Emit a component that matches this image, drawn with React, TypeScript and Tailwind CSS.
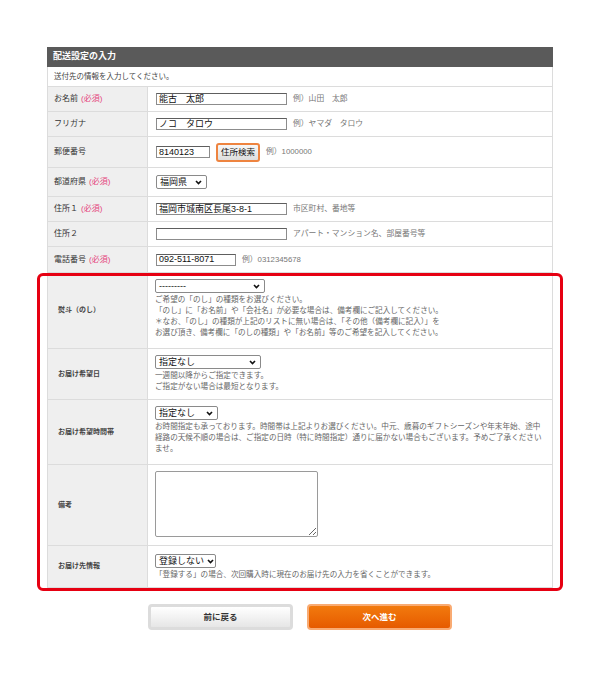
import React from "react";

const Req = () => <span className="ml-[3px] text-[#e5457d]">(必須)</span>;

const Chevron = () => (
  <svg width="7" height="5" viewBox="0 0 7 5" className="shrink-0">
    <polyline points="1,1 3.5,3.6 6,1" fill="none" stroke="#111" strokeWidth="1.6" />
  </svg>
);

const Select = ({ text, w }: { text: string; w: string }) => (
  <div
    className={`flex h-[14px] ${w} items-center justify-between gap-[3px] whitespace-nowrap rounded-[2px] border border-[#8a8a8a] bg-white pl-[3px] pr-[4px] text-[9px] leading-none text-[#111]`}
  >
    <span>{text}</span>
    <Chevron />
  </div>
);

const Input = ({ value, w }: { value: string; w: string }) => (
  <div
    className={`flex h-[12px] ${w} items-center border border-[#8c8c8c] border-t-[#5e5e5e] bg-white px-[2px] text-[9px] leading-none text-[#111]`}
  >
    {value}
  </div>
);

const Row = ({ label, h, children }: { label: React.ReactNode; h: string; children: React.ReactNode }) => (
  <div className={`flex ${h} border-b border-[#dcdcdc]`}>
    <div className="flex w-[100px] shrink-0 items-center border-r border-[#dcdcdc] bg-[#efefef] pl-[6px] text-[8px] text-[#333]">
      {label}
    </div>
    <div className="flex flex-1 items-center gap-[6px] pl-[8px] text-[7.8px] text-[#777]">{children}</div>
  </div>
);

const LowRow = ({ label, h, children }: { label: string; h: string; children: React.ReactNode }) => (
  <div className={`flex ${h} border-b border-[#dcdcdc]`}>
    <div className="flex w-[100px] shrink-0 items-center border-r border-[#dcdcdc] bg-[#efefef] pl-[10px] text-[7px] font-bold text-[#444]">
      {label}
    </div>
    <div className="flex-1 pl-[7px] pr-[7px] pt-[6px] text-[7.6px] leading-[11px] text-[#666]">{children}</div>
  </div>
);

export default function App() {
  return (
    <div className="min-h-[688px] bg-white pt-[47px] font-['Liberation_Sans','Noto_Sans_CJK_JP',sans-serif]">
      <div className="mx-auto w-[506px]">
        <div className="flex h-[20px] items-center bg-[#5a5a5a] pl-[6px] text-[9px] font-bold text-white">
          配送設定の入力
        </div>
        <div className="border-x border-[#dcdcdc]">
          <div className="flex h-[20px] items-center border-b border-[#dcdcdc] pl-[6px] text-[7.5px] text-[#444]">
            送付先の情報を入力してください。
          </div>
          <Row h="h-[25px]" label={<>お名前<Req /></>}>
            <Input value="能古　太郎" w="w-[131px]" />
            <span>例）山田　太郎</span>
          </Row>
          <Row h="h-[25px]" label="フリガナ">
            <Input value="ノコ　タロウ" w="w-[131px]" />
            <span>例）ヤマダ　タロウ</span>
          </Row>
          <Row h="h-[31px]" label="郵便番号">
            <Input value="8140123" w="w-[54px]" />
            <div className="flex h-[19px] w-[44px] items-center justify-center rounded-[3px] border-2 border-[#ee8440] bg-linear-to-b from-[#f7f7f7] to-[#dedede] text-[8.5px] text-[#111]">
              住所検索
            </div>
            <span>例）1000000</span>
          </Row>
          <Row h="h-[29px]" label={<>都道府県<Req /></>}>
            <Select text="福岡県" w="w-[51px]" />
          </Row>
          <Row h="h-[25px]" label={<>住所１<Req /></>}>
            <Input value="福岡市城南区長尾3-8-1" w="w-[131px]" />
            <span>市区町村、番地等</span>
          </Row>
          <Row h="h-[25px]" label="住所２">
            <Input value="" w="w-[131px]" />
            <span>アパート・マンション名、部屋番号等</span>
          </Row>
          <Row h="h-[26px]" label={<>電話番号<Req /></>}>
            <Input value="092-511-8071" w="w-[80px]" />
            <span>例）0312345678</span>
          </Row>

          <div className="relative">
            <LowRow h="h-[76px]" label="熨斗（のし）">
              <Select text="---------" w="w-[110px]" />
              <p className="mt-[1px]">
                ご希望の「のし」の種類をお選びください。
                <br />
                「のし」に「お名前」や「会社名」が必要な場合は、備考欄にご記入してください。
                <br />
                ＊なお、「のし」の種類が上記のリストに無い場合は、「その他（備考欄に記入）」を
                <br />
                お選び頂き、備考欄に「のしの種類」や「お名前」等のご希望を記入してください。
              </p>
            </LowRow>
            <LowRow h="h-[51px]" label="お届け希望日">
              <Select text="指定なし" w="w-[106px]" />
              <p className="mt-[1px]">
                一週間以降からご指定できます。
                <br />
                ご指定がない場合は最短となります。
              </p>
            </LowRow>
            <LowRow h="h-[65px]" label="お届け希望時間帯">
              <Select text="指定なし" w="w-[63px]" />
              <p className="mt-[1px] pr-[2px]">
                お時間指定も承っております。時間帯は上記よりお選びください。中元、歳暮のギフトシーズンや年末年始、途中経路の天候不順の場合は、ご指定の日時（特に時間指定）通りに届かない場合もございます。予めご了承くださいませ。
              </p>
            </LowRow>
            <LowRow h="h-[81px]" label="備考">
              <textarea
                readOnly
                className="block h-[66px] w-[163px] rounded-[2px] border border-[#9a9a9a] bg-white"
              />
            </LowRow>
            <LowRow h="h-[42px]" label="お届け先情報">
              <div className="pt-[2px]">
                <Select text="登録しない" w="w-[61px]" />
              </div>
              <p className="mt-[1px]">「登録する」の場合、次回購入時に現在のお届け先の入力を省くことができます。</p>
            </LowRow>
            <div className="pointer-events-none absolute -bottom-[3px] -left-[11px] -right-[11px] top-0 rounded-[6px] border-[3px] border-[#e60012]" />
          </div>
        </div>

        <div className="mt-[16px] flex justify-center gap-[14px]">
          <div className="flex h-[26px] w-[145px] items-center justify-center rounded-[4px] border-[3px] border-[#dcdcdc] bg-linear-to-b from-white to-[#e6e6e6] text-[8.5px] font-bold text-[#333]">
            前に戻る
          </div>
          <div className="flex h-[26px] w-[145px] items-center justify-center rounded-[4px] border-2 border-[#f9ab73] bg-linear-to-b from-[#f27a0e] to-[#e65a00] text-[8.5px] font-bold text-white">
            次へ進む
          </div>
        </div>
      </div>
    </div>
  );
}
